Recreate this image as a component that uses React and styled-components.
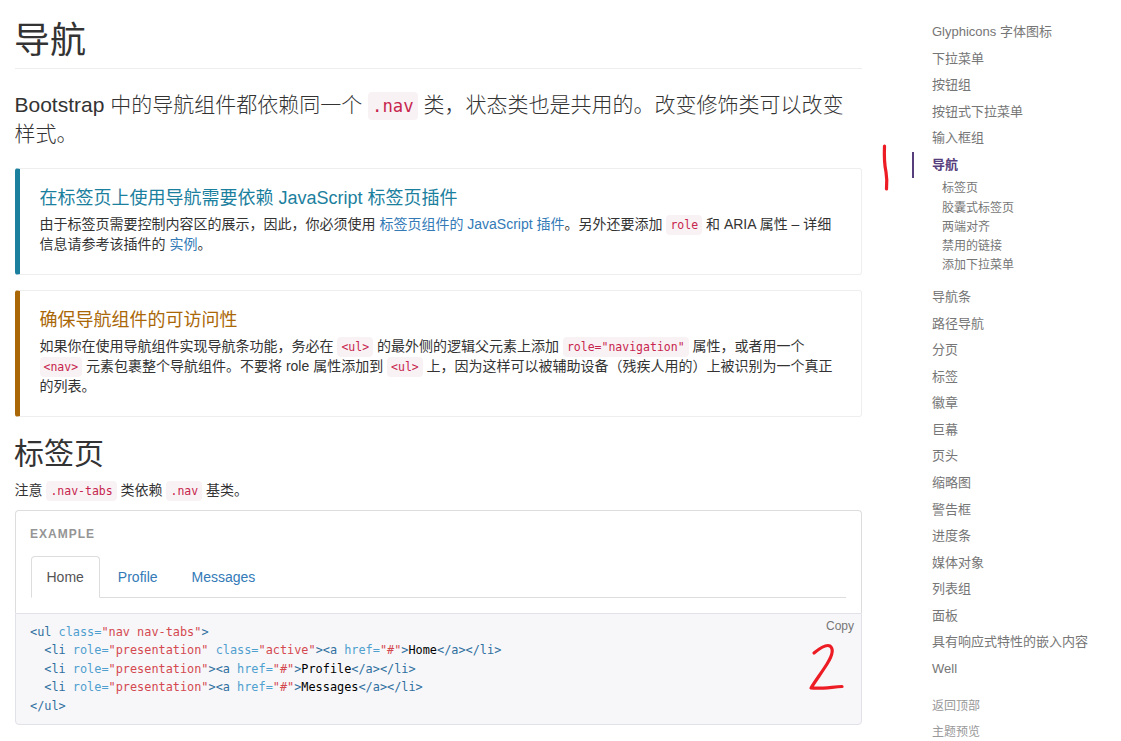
import React from "react";
import styled, { createGlobalStyle } from "styled-components";

const Global = createGlobalStyle`
  html, body { margin: 0; padding: 0; background: #fff; }
  body {
    font-family: "Liberation Sans", "Noto Sans CJK SC", sans-serif;
    font-size: 14px; line-height: 20px; color: #333;
  }
  * { box-sizing: border-box; }
`;

const Page = styled.div`
  position: relative; width: 1121px; height: 741px; overflow: hidden;
  display: flex; align-items: flex-start; padding-left: 15px;
`;
const Main = styled.main`width: 847px; flex: none;`;
const PageHeader = styled.div`
  margin-top: 21px; padding-bottom: 7px; border-bottom: 1px solid #eee;
`;
const H1 = styled.h1`
  margin: 0 0 0 -1px; font-size: 36px; line-height: 40px; font-weight: 400;
`;
const Lead = styled.p`
  margin: 21px 0 19.2px -0.5px; font-size: 21px; line-height: 29.4px; font-weight: 300;
`;
const Code = styled.code`
  font-family: "DejaVu Sans Mono", monospace;
  font-size: ${p => (p.$large ? "17.3px" : "11.5px")};
  line-height: 1;
  padding: ${p => (p.$large ? "4px 4px" : "3px 4px")};
  color: #c7254e; background: #f9f2f4; border-radius: 4px;
`;
const Callout = styled.section`
  padding: 20px 20px 20px 19.5px; margin-bottom: 15px;
  border: 1px solid #eee; border-left: 5px solid ${p => p.$color};
  border-radius: 3px;
`;
const CalloutTitle = styled.h4`
  margin: 0 0 5px; font-size: 18px; line-height: 19.8px; font-weight: 400;
  color: ${p => p.$color};
`;
const CalloutText = styled.p`margin: 0;`;
const Link = styled.a`color: #337ab7; text-decoration: none;`;
const H2 = styled.h2`
  margin: 20px 0 10px -1px; font-size: 30px; line-height: 33px; font-weight: 400;
`;
const Note = styled.p`margin: 0 0 10px -0.5px;`;
const Example = styled.div`
  padding: 45px 15px 15px; border: 1px solid #ddd; border-bottom: 0;
  border-radius: 4px 4px 0 0; position: relative;
  &::after {
    content: "EXAMPLE"; position: absolute; top: 13px; left: 14px;
    font-size: 12px; font-weight: 700; color: #959595; letter-spacing: 1px;
  }
`;
const Tabs = styled.ul`
  display: flex; list-style: none; margin: 0; padding: 0;
  border-bottom: 1px solid #ddd;
`;
const Tab = styled.li`
  margin-bottom: -1px; margin-right: 2px;
  padding: 10px 15.5px 10px 14.5px; height: 42px; border-radius: 4px 4px 0 0;
  border: 1px solid ${p => (p.$active ? "#ddd" : "transparent")};
  border-bottom-color: ${p => (p.$active ? "#fff" : "transparent")};
  color: ${p => (p.$active ? "#555" : "#337ab7")};
  line-height: 20px;
`;
const CodeWrap = styled.div`
  position: relative; padding: 9px 14px; height: 112px;
  background: #f7f7f9; border: 1px solid #e1e1e8; border-radius: 0 0 4px 4px;
`;
const Pre = styled.pre`
  margin: 0; font-family: "DejaVu Sans Mono", monospace;
  font-size: 11.86px; line-height: 18.57px; color: #000;
`;
const Tag = styled.span`color: #2f6f9f;`;
const Attr = styled.span`color: #4f9fcf;`;
const Str = styled.span`color: #d44950;`;
const Copy = styled.span`
  position: absolute; top: 3px; right: 7px;
  font-size: 12px; line-height: 18px; color: #767676;
`;

const Side = styled.nav`margin: 19px 0 0 50px; width: 208px; flex: none;`;
const SideList = styled.ul`list-style: none; margin: 0; padding: 0;`;
const SideLink = styled.div`
  padding: 4px 20px 4px 18px; font-size: 13px; line-height: 18.57px;
  color: ${p => (p.$active ? "#563d7c" : "#767676")};
  font-weight: ${p => (p.$active ? 700 : 400)};
  border-left: 2px solid ${p => (p.$active ? "#563d7c" : "transparent")};
`;
const SubList = styled.ul`list-style: none; margin: 1px 0 9px; padding: 0;`;
const SubLink = styled.li`
  padding: 1px 30px; font-size: 12px; line-height: 17.14px; color: #767676;
`;
const SideExtra = styled.a`
  display: block; margin-top: ${p => (p.$first ? "10px" : 0)};
  padding: 4px 20px; font-size: 12px; line-height: 18.57px; color: #999;
`;
const Ink = styled.svg`
  position: absolute; left: 0; top: 0; pointer-events: none;
`;

const navBefore = ["Glyphicons 字体图标", "下拉菜单", "按钮组", "按钮式下拉菜单", "输入框组"];
const subs = ["标签页", "胶囊式标签页", "两端对齐", "禁用的链接", "添加下拉菜单"];
const navAfter = ["导航条", "路径导航", "分页", "标签", "徽章", "巨幕", "页头", "缩略图", "警告框", "进度条", "媒体对象", "列表组", "面板", "具有响应式特性的嵌入内容", "Well"];

const Li = ({ children }) => (
  <>
    {"  "}<Tag>&lt;li</Tag> <Attr>role=</Attr><Str>"presentation"</Str>{children}
  </>
);
const A = ({ label }) => (
  <>
    <Tag>&gt;&lt;a</Tag> <Attr>href=</Attr><Str>"#"</Str><Tag>&gt;</Tag>{label}<Tag>&lt;/a&gt;&lt;/li&gt;</Tag>
  </>
);

export default function App() {
  return (
    <Page>
      <Global />
      <Main>
        <PageHeader><H1>导航</H1></PageHeader>
        <Lead>Bootstrap 中的导航组件都依赖同一个 <Code $large>.nav</Code> 类，状态类也是共用的。改变修饰类可以改变样式。</Lead>
        <Callout $color="#1b809e">
          <CalloutTitle $color="#1b809e">在标签页上使用导航需要依赖 JavaScript 标签页插件</CalloutTitle>
          <CalloutText>由于标签页需要控制内容区的展示，因此，你必须使用 <Link>标签页组件的 JavaScript 插件</Link>。另外还要添加 <Code>role</Code> 和 ARIA 属性 – 详细信息请参考该插件的 <Link>实例</Link>。</CalloutText>
        </Callout>
        <Callout $color="#aa6708">
          <CalloutTitle $color="#aa6708">确保导航组件的可访问性</CalloutTitle>
          <CalloutText>如果你在使用导航组件实现导航条功能，务必在 <Code>&lt;ul&gt;</Code> 的最外侧的逻辑父元素上添加 <Code>role="navigation"</Code> 属性，或者用一个 <Code>&lt;nav&gt;</Code> 元素包裹整个导航组件。不要将 role 属性添加到 <Code>&lt;ul&gt;</Code> 上，因为这样可以被辅助设备（残疾人用的）上被识别为一个真正的列表。</CalloutText>
        </Callout>
        <H2>标签页</H2>
        <Note>注意 <Code>.nav-tabs</Code> 类依赖 <Code>.nav</Code> 基类。</Note>
        <Example>
          <Tabs>
            <Tab $active>Home</Tab>
            <Tab>Profile</Tab>
            <Tab>Messages</Tab>
          </Tabs>
        </Example>
        <CodeWrap>
          <Copy>Copy</Copy>
          <Pre>
            <Tag>&lt;ul</Tag> <Attr>class=</Attr><Str>"nav nav-tabs"</Str><Tag>&gt;</Tag>{"\n"}
            <Li> <Attr>class=</Attr><Str>"active"</Str><A label="Home" /></Li>{"\n"}
            <Li><A label="Profile" /></Li>{"\n"}
            <Li><A label="Messages" /></Li>{"\n"}
            <Tag>&lt;/ul&gt;</Tag>
          </Pre>
        </CodeWrap>
      </Main>
      <Side>
        <SideList>
          {navBefore.map(t => <li key={t}><SideLink>{t}</SideLink></li>)}
          <li>
            <SideLink $active>导航</SideLink>
            <SubList>{subs.map(t => <SubLink key={t}>{t}</SubLink>)}</SubList>
          </li>
          {navAfter.map(t => <li key={t}><SideLink>{t}</SideLink></li>)}
        </SideList>
        <SideExtra $first>返回顶部</SideExtra>
        <SideExtra>主题预览</SideExtra>
      </Side>
      <Ink width="1121" height="741" viewBox="0 0 1121 741" fill="none" stroke="#ed1c24" strokeWidth="3.2" strokeLinecap="round" strokeLinejoin="round">
        <path d="M884.5 146 C884 158 884.5 165 886 172 C887 178 887 184 886.5 189" />
        <path d="M814 653 C820 648 826 644 830 646 C834 649 832 656 827 664 C822 672 816 680 811 688 C821 689 832 687 842 686.5" />
      </Ink>
    </Page>
  );
}
